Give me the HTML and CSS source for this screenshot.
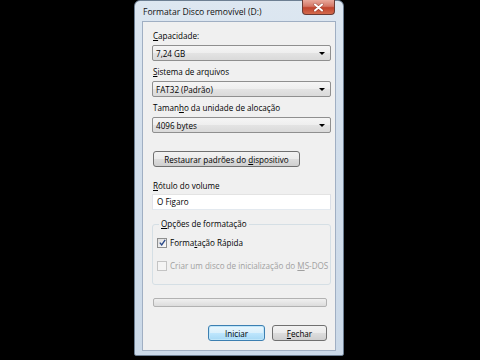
FILE: index.html
```html
<!DOCTYPE html>
<html lang="pt-BR">

<head>
    <meta charset="UTF-8">
    <title>Formatar Disco removível (D:)</title>
    <link rel="stylesheet" href="styles.css">
</head>

<body>

    <div class="window">

        <!-- Barra de título -->
        <div class="titlebar">
            <span class="title">Formatar Disco removível (D:)</span>
            <span class="close">
                <svg width="11" height="9" viewBox="0 0 11 9">
                    <path d="M2 1.5 L9 7.5 M9 1.5 L2 7.5" stroke="#5a1a12" stroke-width="3.2" stroke-linecap="round" opacity="0.35"/>
                    <path d="M2 1.5 L9 7.5 M9 1.5 L2 7.5" stroke="#fff" stroke-width="2" stroke-linecap="round"/>
                </svg>
            </span>
        </div>

        <div class="client">

            <div class="field first">
                <span class="label"><u>C</u>apacidade:</span>
                <div class="combo"><span>7,24 GB</span><i class="arrow"></i></div>
            </div>

            <div class="field">
                <span class="label"><u>S</u>istema de arquivos</span>
                <div class="combo"><span>FAT32 (Padrão)</span><i class="arrow"></i></div>
            </div>

            <div class="field">
                <span class="label">Taman<u>h</u>o da unidade de alocação</span>
                <div class="combo"><span>4096 bytes</span><i class="arrow"></i></div>
            </div>

            <button type="button" class="btn restore">Restaurar padrões do <u>d</u>ispositivo</button>

            <div class="field volume">
                <span class="label"><u>R</u>ótulo do volume</span>
                <div class="textbox">O Figaro</div>
            </div>

            <!-- Opções de formatação -->
            <fieldset class="group">
                <legend><u>O</u>pções de formatação</legend>
                <div class="check-row">
                    <span class="checkbox checked">
                        <svg width="7" height="7" viewBox="0 0 7 7">
                            <path d="M0.8 3.6 L2.7 5.9 L6.2 0.8" fill="none" stroke="#2b4a8a" stroke-width="1.4"/>
                        </svg>
                    </span>
                    <span>Forma<u>t</u>ação Rápida</span>
                </div>
                <div class="check-row disabled">
                    <span class="checkbox"></span>
                    <span>Criar um disco de inicialização do <u>M</u>S-DOS</span>
                </div>
            </fieldset>

            <div class="progress"></div>

            <div class="actions">
                <button type="button" class="btn default start">Iniciar</button>
                <button type="button" class="btn finish"><u>F</u>echar</button>
            </div>

        </div>
    </div>

</body>

</html>
```

FILE: styles.css
```css
body {
    margin: 0;
    background-color: #000;
    font-family: "Open Sans", "Noto Sans", sans-serif;
    font-size: 8.1px;
    color: #000;
}

u {
    text-decoration-thickness: 1px;
    text-underline-offset: 1px;
}

.window {
    width: 210px;
    height: 356px;
    margin-left: 134px;
    box-sizing: border-box;
    padding: 0 7px 4px 7px;
    background: linear-gradient(#dde7f1, #d2deeb 40%, #cbd9e8);
    border: 1px solid #6d7f93;
    border-radius: 6px 6px 2px 2px;
    display: flex;
    flex-direction: column;
}

.titlebar {
    height: 20px;
    display: flex;
    justify-content: space-between;
    align-items: flex-start;
    padding: 0 1px 0 1px;
}

.title {
    margin-top: 5px;
    font-size: 8.6px;
    color: #111;
}

.close {
    width: 33px;
    height: 15px;
    margin-top: -1px;
    box-sizing: border-box;
    border: 1px solid #6b3a33;
    border-top: none;
    border-radius: 0 0 4px 4px;
    background: linear-gradient(#e9a99c, #d47766 45%, #c0432d 55%, #d36a4c);
    display: flex;
    align-items: center;
    justify-content: center;
}

.client {
    flex: 1;
    background-color: #f0f0f0;
    border: 1px solid #a0afc3;
    padding: 0 4px 0 9px;
    display: flex;
    flex-direction: column;
}

.field {
    display: flex;
    flex-direction: column;
}

.first {
    margin-top: 8px;
}

.label {
    height: 12px;
    line-height: 12px;
    padding-left: 1px;
    margin-bottom: 3px;
}

.combo {
    height: 16px;
    box-sizing: border-box;
    border: 1px solid #8f8f8f;
    border-radius: 2px;
    background: linear-gradient(#f5f5f5, #eeeeee 50%, #e3e3e3 51%, #dadada);
    display: flex;
    align-items: center;
    justify-content: space-between;
    padding: 0 5px 0 3px;
    margin-bottom: 5px;
}

.arrow {
    width: 0;
    height: 0;
    border-left: 3px solid transparent;
    border-right: 3px solid transparent;
    border-top: 3px solid #000;
}

.btn {
    font-family: inherit;
    font-size: inherit;
    color: #000;
    height: 16px;
    padding: 0;
    border: 1px solid #707070;
    border-radius: 3px;
    background: linear-gradient(#f2f2f2, #ebebeb 50%, #dddddd 51%, #cfcfcf);
}

.restore {
    width: 147px;
    margin-top: 13px;
    margin-left: 1px;
}

.volume {
    margin-top: 13px;
}

.volume .label {
    margin-bottom: 2px;
}

.textbox {
    height: 16px;
    line-height: 14px;
    box-sizing: border-box;
    border: 1px solid #abadb3;
    border-top-color: #e3e3e3;
    border-left-color: #e2e3ea;
    border-right-color: #dbdfe6;
    border-bottom-color: #e3e9ef;
    background-color: #fff;
    padding-left: 4px;
}

.group {
    margin: 8px 0 0 0;
    padding: 6px 0 12px 4px;
    border: 1px solid #d5dfe5;
    border-radius: 3px;
}

.group legend {
    padding: 0 2px;
    margin-left: 2px;
    line-height: 12px;
}

.check-row {
    display: flex;
    align-items: center;
    gap: 3px;
    height: 13px;
    margin-bottom: 10px;
}

.check-row:last-child {
    margin-bottom: 0;
}

.checkbox {
    width: 8px;
    height: 8px;
    border: 1px solid #8e8f8f;
    background: linear-gradient(135deg, #dcdcdc, #fbfbfb);
    display: flex;
    align-items: center;
    justify-content: center;
}

.disabled {
    color: #a0a0a0;
}

.disabled .checkbox {
    border-color: #c4c4c4;
    background: #f4f4f4;
}

.progress {
    height: 9px;
    box-sizing: border-box;
    margin: 13px 4px 0 1px;
    border: 1px solid #b2b2b2;
    border-radius: 2px;
    background: linear-gradient(#f0f0f0, #dcdcdc);
}

.actions {
    display: flex;
    justify-content: flex-end;
    gap: 7px;
    margin-top: 18px;
    margin-right: 4px;
}

.actions .start {
    width: 57px;
}

.actions .finish {
    width: 55px;
}

.default {
    border-color: #3c7fb1;
    background: linear-gradient(#eaf6fd, #d9f0fc 50%, #bee6fd 51%, #a7d9f5);
    box-shadow: 0 0 0 1px #bfe6fa inset;
}
```
